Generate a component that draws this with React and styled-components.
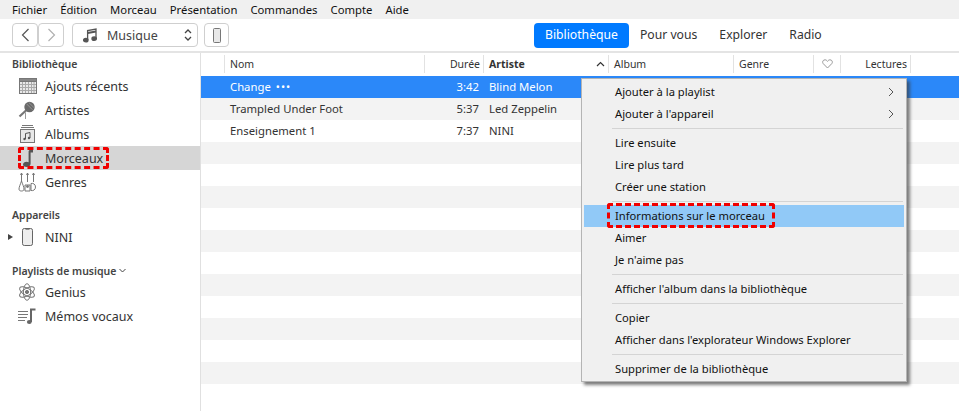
import React from "react";
import styled, { createGlobalStyle } from "styled-components";

const Global = createGlobalStyle`
  html, body { margin: 0; padding: 0; height: 100%; background: #fff; overflow: hidden; }
  body { font-family: "Noto Sans", "Open Sans", sans-serif; font-size: 12px; color: #1f1f1f; }
  #root { height: 100%; }
`;

const Page = styled.div`
  width: 959px;
  height: 411px;
  display: flex;
  flex-direction: column;
  overflow: hidden;
`;

const MenuBar = styled.div`
  height: 19px;
  flex: none;
  background: #f0f0f0;
  display: flex;
  align-items: center;
  gap: 13px;
  padding-left: 12px;
  font-size: 11.3px;
  color: #111;
`;

const Toolbar = styled.div`
  height: 34px;
  box-sizing: border-box;
  background: #fff;
  border-bottom: 2px solid #e4e4e4;
  display: flex;
  align-items: center;
  padding-left: 12px;
  flex: none;
`;

const NavButton = styled.button`
  width: ${(p) => p.$w || 26}px;
  height: 24px;
  box-sizing: border-box;
  padding: 0;
  background: #fff;
  border: 1px solid #cfcfcf;
  border-radius: 4px;
  display: flex;
  align-items: center;
  justify-content: center;
  color: ${(p) => (p.$off ? "#b0b0b0" : "#555")};
`;

const SourceSelect = styled.div`
  width: 126px;
  height: 24px;
  box-sizing: border-box;
  margin: 0 6px 0 8px;
  border: 1px solid #cfcfcf;
  border-radius: 4px;
  display: flex;
  align-items: center;
  padding: 0 5px 0 10px;
  font-size: 12.5px;
  color: #444;
  gap: 10px;
`;

const SelectLabel = styled.span`
  flex: 1;
`;

const Tabs = styled.div`
  display: flex;
  align-items: center;
  margin-left: 305px;
  font-size: 12.2px;
  color: #333;
`;

const Tab = styled.div`
  height: 25px;
  line-height: 24px;
  padding: 0 11px;
  border-radius: 4px;
  background: ${(p) => (p.$active ? "#007aff" : "transparent")};
  color: ${(p) => (p.$active ? "#fff" : "#333")};
`;

const Body = styled.div`
  flex: 1;
  display: flex;
  min-height: 0;
  position: relative;
`;

const Sidebar = styled.div`
  width: 201px;
  flex: none;
  box-sizing: border-box;
  border-right: 1px solid #e0e0e0;
  padding-top: 4px;
`;

const SectionTitle = styled.div`
  height: ${(p) => p.$h || 17}px;
  box-sizing: border-box;
  padding: 0 0 3px 12px;
  margin-top: ${(p) => p.$mt || 0}px;
  font-size: 10.5px;
  font-weight: 600;
  color: #444;
  display: flex;
  align-items: center;
  gap: 3px;
`;

const SideRow = styled.div`
  height: 24px;
  display: flex;
  align-items: center;
  position: relative;
  background: ${(p) => (p.$active ? "#d6d6d6" : "transparent")};
  color: #333;
  font-size: 12.5px;
`;

const SideIcon = styled.span`
  width: 45px;
  padding-left: ${(p) => p.$pl || 18}px;
  box-sizing: border-box;
  flex: none;
  display: flex;
  align-items: center;
  color: #555;
`;

const Disclosure = styled.span`
  position: absolute;
  left: 8px;
  top: 9px;
  border-left: 5px solid #444;
  border-top: 3.5px solid transparent;
  border-bottom: 3.5px solid transparent;
`;

const SideCallout = styled.span`
  position: absolute;
  left: 18px;
  top: 1px;
  width: 91px;
  height: 22px;
  box-sizing: border-box;
  border: 3px dashed #f00000;
  border-radius: 3px;
`;

const Main = styled.div`
  flex: 1;
  min-width: 0;
`;

const columns = "24px 200px 59px 125px 125px 80px 27px 70px 1fr";

const HeaderRow = styled.div`
  display: grid;
  grid-template-columns: ${columns};
  height: 23px;
  box-sizing: border-box;
  font-size: 10.5px;
  color: #333;
`;

const HeadCell = styled.div`
  height: 18px;
  margin-top: 2px;
  line-height: 18px;
  padding: 0 3px 0 5px;
  box-sizing: border-box;
  border-right: ${(p) => (p.$last ? "none" : "1px solid #e2e2e2")};
  font-weight: ${(p) => (p.$bold ? 700 : 400)};
  display: flex;
  align-items: center;
  justify-content: ${(p) => (p.$right ? "flex-end" : "space-between")};
`;

const HeartCell = styled(HeadCell)`
  padding: 0;
  justify-content: center;
  color: #999;
`;

const Row = styled.div`
  display: grid;
  grid-template-columns: ${columns};
  height: 22px;
  line-height: 22px;
  font-size: 11.3px;
  background: ${(p) => (p.$selected ? "#2b88f9" : p.$alt ? "#f3f3f3" : "#fff")};
  color: ${(p) => (p.$selected ? "#fff" : "#333")};
`;

const Cell = styled.div`
  padding: 0 5px;
  white-space: nowrap;
  text-align: ${(p) => (p.$right ? "right" : "left")};
`;

const Dots = styled.span`
  margin-left: 5px;
  letter-spacing: 1px;
  font-size: 11px;
`;

const ContextMenu = styled.div`
  position: absolute;
  left: 581px;
  top: 25px;
  width: 326px;
  height: 304px;
  box-sizing: border-box;
  background: #f0f0f0;
  border: 1px solid #b4b4b4;
  box-shadow: 3px 3px 3px rgba(60, 60, 60, 0.65);
  padding: 2px 2px 1px;
  font-size: 11.2px;
  color: #111;
`;

const MenuItem = styled.div`
  height: 22px;
  line-height: 22px;
  padding-left: 31px;
  position: relative;
  background: ${(p) => (p.$hot ? "#91c9f7" : "transparent")};
`;

const Chevron = styled.span`
  position: absolute;
  right: 10px;
  top: 6px;
  display: flex;
  color: #555;
`;

const MenuCallout = styled.span`
  position: absolute;
  left: 23px;
  top: -2px;
  width: 168px;
  height: 25px;
  box-sizing: border-box;
  border: 3px dashed #f00000;
  border-radius: 3px;
`;

const Separator = styled.div`
  height: 1px;
  margin: 3px 1px 3px 28px;
  background: #d4d4d4;
`;

const Svg = ({ w = 16, h = 16, children }) => (
  <svg width={w} height={h} viewBox={`0 0 ${w} ${h}`} fill="none" stroke="currentColor" strokeWidth="1">
    {children}
  </svg>
);

const Note = () => (
  <svg width="10" height="17" viewBox="0 0 10 17" fill="currentColor">
    <path d="M5.6 1.6C5.6 .6 6.2 0 7.2 0H10V2.6H7.6V13.6C7.6 15.6 6 17 3.6 17C1.4 17 0 16 0 14.6C0 13 1.6 11.8 3.6 11.8C4.4 11.8 5 12 5.6 12.3Z" />
  </svg>
);

const BeamedNote = () => (
  <svg width="14" height="15" viewBox="0 0 14 15" fill="none" stroke="#555" strokeWidth="1.3">
    <path d="M4.6 12 V2.6 L13 1 V10.5" />
    <path d="M4.6 5 L13 3.4" strokeWidth="2" />
    <ellipse cx="2.8" cy="12.2" rx="2.2" ry="1.7" fill="#555" />
    <ellipse cx="11.2" cy="10.7" rx="2.2" ry="1.7" fill="#555" />
  </svg>
);

const RecentIcon = () => (
  <Svg w={18} h={16}>
    <rect x="0.5" y="0.5" width="17" height="15" fill="#e9e9e9" stroke="#777" />
    <rect x="0.5" y="0.5" width="17" height="3" fill="#888" stroke="#777" />
    <path d="M3.5 4V15M6.5 4V15M9.5 4V15M12.5 4V15M15 4V15M1 6.5H17M1 9.5H17M1 12.5H17" stroke="#aaa" />
  </Svg>
);

const MicIcon = () => (
  <Svg w={18} h={18}>
    <path d="M7.5 11.5V18" stroke="#999" />
    <path d="M8.5 9 L1.5 15.5" stroke="#777" strokeWidth="2.2" />
    <circle cx="11.5" cy="6" r="5.2" fill="#6a6a6a" stroke="none" />
    <path d="M8.5 2.8 L14.5 8.8 M10.8 1.5 L16 6.6" stroke="#a5a5a5" strokeWidth=".7" />
  </Svg>
);

const AlbumIcon = () => (
  <svg width="15" height="18" viewBox="0 0 15 18" fill="none" stroke="#777">
    <path d="M2 .5H13M1 2.5H14" />
    <rect x="0.5" y="4.5" width="14" height="13" fill="#e8e8e8" />
    <path d="M5.5 14V8.5L10 7.5V13" stroke="#555" />
    <circle cx="4.5" cy="14" r="1.2" fill="#555" stroke="none" />
    <circle cx="9" cy="13" r="1.2" fill="#555" stroke="none" />
  </svg>
);

const GenresIcon = () => (
  <svg width="19" height="20" viewBox="0 0 19 20" fill="none" stroke="#777" strokeWidth="1">
    <path d="M3.5 1V10M9.5 1V10M15.5 1V10" />
    <path d="M2.5 3L3.5 1L4.5 3M8.5 3L9.5 1L10.5 3M14.5 3L15.5 1L16.5 3" />
    <path d="M3.5 9C2.5 12 1 15 1 17C1 18.5 2 19 3.5 19C5 19 6 18.5 6 17C6 15 4.5 12 3.5 9Z" />
    <path d="M7 13H12V19H7ZM13 11.5C15 11 17.5 12 17.5 15C17.5 18 15 19 13 18.5Z" />
    <circle cx="9.5" cy="14.5" r="1" fill="#777" />
  </svg>
);

const PhoneIcon = () => (
  <svg width="11" height="18" viewBox="0 0 11 18" fill="#eee" stroke="#666">
    <rect x="0.5" y="0.5" width="10" height="17" rx="1.8" />
    <path d="M3.5 1.2H7.5" strokeWidth="1" />
  </svg>
);

const AtomIcon = () => (
  <svg width="18" height="18" viewBox="0 0 18 18" fill="none" stroke="#777" strokeWidth="1">
    <ellipse cx="9" cy="9" rx="3.6" ry="8.3" />
    <ellipse cx="9" cy="9" rx="3.6" ry="8.3" transform="rotate(60 9 9)" />
    <ellipse cx="9" cy="9" rx="3.6" ry="8.3" transform="rotate(120 9 9)" />
    <circle cx="9" cy="9" r="1.6" fill="#777" />
  </svg>
);

const MemoIcon = () => (
  <svg width="18" height="17" viewBox="0 0 18 17" fill="none" stroke="#777">
    <path d="M0 3.5H10M0 6.5H10M0 9.5H9M0 12.5H7" />
    <path d="M13 14V1.5H17.5" strokeWidth="2" stroke="#666" />
    <ellipse cx="11.3" cy="14" rx="2.4" ry="2" fill="#666" stroke="none" />
  </svg>
);

const tracks = [
  { name: "Change", time: "3:42", artist: "Blind Melon", selected: true },
  { name: "Trampled Under Foot", time: "5:37", artist: "Led Zeppelin" },
  { name: "Enseignement 1", time: "7:37", artist: "NINI" },
];

const menu = [
  ["Ajouter à la playlist", "sub"],
  ["Ajouter à l'appareil", "sub"],
  "-",
  ["Lire ensuite"],
  ["Lire plus tard"],
  ["Créer une station"],
  "-",
  ["Informations sur le morceau", "hot"],
  ["Aimer"],
  ["Je n'aime pas"],
  "-",
  ["Afficher l'album dans la bibliothèque"],
  "-",
  ["Copier"],
  ["Afficher dans l'explorateur Windows Explorer"],
  "-",
  ["Supprimer de la bibliothèque"],
];

const App = () => {
  const rows = Array.from({ length: 15 }, (_, i) => tracks[i] || {});
  return (
    <Page>
      <Global />
      <MenuBar>
        {["Fichier", "Édition", "Morceau", "Présentation", "Commandes", "Compte", "Aide"].map((m) => (
          <span key={m}>{m}</span>
        ))}
      </MenuBar>
      <Toolbar>
        <NavButton>
          <Svg w={9} h={14}><path d="M7.5 1L1.5 7L7.5 13" strokeWidth="1.2" /></Svg>
        </NavButton>
        <NavButton $off>
          <Svg w={9} h={14}><path d="M1.5 1L7.5 7L1.5 13" strokeWidth="1.2" /></Svg>
        </NavButton>
        <SourceSelect>
          <BeamedNote />
          <SelectLabel>Musique</SelectLabel>
          <Svg w={8} h={14}><path d="M1 5L4 2L7 5M1 9L4 12L7 9" strokeWidth="1.3" /></Svg>
        </SourceSelect>
        <NavButton $w={25}>
          <svg width="8" height="15" viewBox="0 0 8 15" fill="#e8e8e8" stroke="#777"><rect x=".5" y=".5" width="7" height="14" rx="1" /></svg>
        </NavButton>
        <Tabs>
          <Tab $active>Bibliothèque</Tab>
          <Tab>Pour vous</Tab>
          <Tab>Explorer</Tab>
          <Tab>Radio</Tab>
        </Tabs>
      </Toolbar>
      <Body>
        <Sidebar>
          <SectionTitle>Bibliothèque</SectionTitle>
          <SideRow><SideIcon $pl={19}><RecentIcon /></SideIcon>Ajouts récents</SideRow>
          <SideRow><SideIcon><MicIcon /></SideIcon>Artistes</SideRow>
          <SideRow><SideIcon $pl={20}><AlbumIcon /></SideIcon>Albums</SideRow>
          <SideRow $active>
            <SideIcon $pl={23}><Note /></SideIcon>Morceaux
            <SideCallout />
          </SideRow>
          <SideRow><SideIcon><GenresIcon /></SideIcon>Genres</SideRow>
          <SectionTitle $mt={14}>Appareils</SectionTitle>
          <SideRow>
            <Disclosure />
            <SideIcon $pl={22}><PhoneIcon /></SideIcon>NINI
          </SideRow>
          <SectionTitle $mt={15} $h={16}>
            Playlists de musique
            <Svg w={7} h={5}><path d="M.5 1L3.5 4L6.5 1" /></Svg>
          </SectionTitle>
          <SideRow><SideIcon><AtomIcon /></SideIcon>Genius</SideRow>
          <SideRow><SideIcon><MemoIcon /></SideIcon>Mémos vocaux</SideRow>
        </Sidebar>
        <Main>
          <HeaderRow>
            <HeadCell />
            <HeadCell>Nom</HeadCell>
            <HeadCell $right>Durée</HeadCell>
            <HeadCell $bold>
              Artiste
              <Svg w={9} h={6}><path d="M1 5L4.5 1.5L8 5" strokeWidth="1.2" /></Svg>
            </HeadCell>
            <HeadCell>Album</HeadCell>
            <HeadCell>Genre</HeadCell>
            <HeartCell>
              <Svg w={11} h={10}><path d="M5.5 9L1.2 4.6C0 3.2 .8 .8 3 .8C4.2 .8 5 1.6 5.5 2.4C6 1.6 6.8 .8 8 .8C10.2 .8 11 3.2 9.8 4.6Z" /></Svg>
            </HeartCell>
            <HeadCell $right>Lectures</HeadCell>
            <HeadCell $last />
          </HeaderRow>
          {rows.map((t, i) => (
            <Row key={i} $selected={t.selected} $alt={i % 2 === 1}>
              <Cell />
              <Cell>{t.name}{t.selected && <Dots>•••</Dots>}</Cell>
              <Cell $right>{t.time}</Cell>
              <Cell>{t.artist}</Cell>
            </Row>
          ))}
        </Main>
        <ContextMenu>
          {menu.map((m, i) =>
            m === "-" ? (
              <Separator key={i} />
            ) : (
              <MenuItem key={i} $hot={m[1] === "hot"}>
                {m[0]}
                {m[1] === "sub" && (
                  <Chevron><Svg w={6} h={10}><path d="M1 1L5 5L1 9" /></Svg></Chevron>
                )}
                {m[1] === "hot" && <MenuCallout />}
              </MenuItem>
            )
          )}
        </ContextMenu>
      </Body>
    </Page>
  );
};

export default App;
